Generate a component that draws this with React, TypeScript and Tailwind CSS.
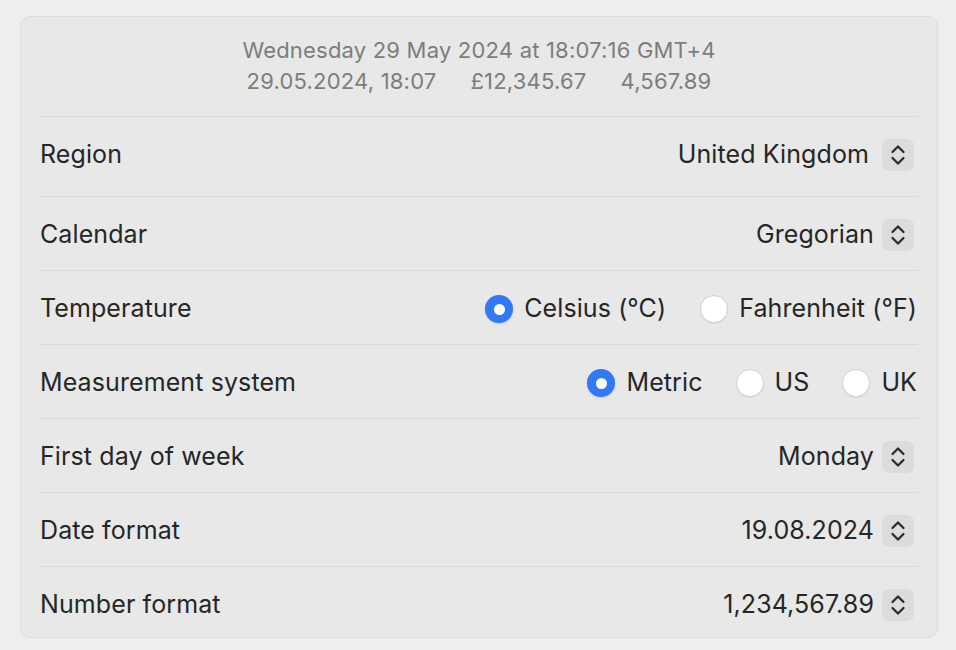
import React from 'react';

const font = { fontFamily: 'Inter, "Noto Sans", sans-serif' };

const Chevrons: React.FC = () => (
  <div className="w-[32px] h-[32px] rounded-[7px] bg-[#dcdcdc] flex items-center justify-center">
    <svg width="16" height="22" viewBox="0 0 16 22" fill="none" stroke="#2a2a2a" strokeWidth="2.2" strokeLinecap="round" strokeLinejoin="round">
      <polyline points="2.5,8 8,2.5 13.5,8" />
      <polyline points="2.5,14 8,19.5 13.5,14" />
    </svg>
  </div>
);

const Radio: React.FC<{ checked?: boolean; label: string }> = ({ checked, label }) => (
  <div className="flex items-center gap-[11px]">
    {checked ? (
      <div className="w-[28px] h-[28px] rounded-full bg-[#3179f5] flex items-center justify-center shadow-[0_1px_2px_rgba(0,0,0,0.15)]">
        <div className="w-[11px] h-[11px] rounded-full bg-white" />
      </div>
    ) : (
      <div className="w-[28px] h-[28px] rounded-full bg-white border border-[#d2d2d2] shadow-[0_1px_1px_rgba(0,0,0,0.06)]" />
    )}
    <span>{label}</span>
  </div>
);

const Select: React.FC<{ value: string; extra?: boolean }> = ({ value, extra }) => (
  <div className={`flex items-center mr-[4px] ${extra ? 'gap-[13px]' : 'gap-[8px]'}`}>
    <span>{value}</span>
    <Chevrons />
  </div>
);

const Row: React.FC<{ label: string; children: React.ReactNode; className?: string }> = ({ label, children, className }) => (
  <div className={`flex items-center justify-between border-t border-[#dadada] ${className ?? 'h-[74px] pt-[3px]'}`}>
    <span>{label}</span>
    {children}
  </div>
);

export default function App() {
  return (
    <div className="w-[956px] h-[650px] bg-[#eeeeee] pt-[16px] pl-[20px] pr-[18px]" style={font}>
      <div className="bg-[#e8e8e8] border border-[#dddddd] rounded-[10px] px-[19px] text-[25px] tracking-[0.1px] text-[#262626]">
        <div className="h-[99px] flex flex-col items-center pt-[18px] text-[22px] tracking-[0.2px] leading-[31px] text-[#7d7d7d]">
          <div>Wednesday 29 May 2024 at 18:07:16 GMT+4</div>
          <div className="flex gap-[34px]">
            <span>29.05.2024, 18:07</span>
            <span>£12,345.67</span>
            <span>4,567.89</span>
          </div>
        </div>
        <Row label="Region" className="h-[80px] pb-[4px]">
          <Select value="United Kingdom" extra />
        </Row>
        <Row label="Calendar">
          <Select value="Gregorian" />
        </Row>
        <Row label="Temperature">
          <div className="flex items-center gap-[34px] mr-[1px]">
            <Radio checked label="Celsius (°C)" />
            <Radio label="Fahrenheit (°F)" />
          </div>
        </Row>
        <Row label="Measurement system">
          <div className="flex items-center gap-[33px] mr-[1px]">
            <Radio checked label="Metric" />
            <Radio label="US" />
            <Radio label="UK" />
          </div>
        </Row>
        <Row label="First day of week">
          <Select value="Monday" />
        </Row>
        <Row label="Date format">
          <Select value="19.08.2024" />
        </Row>
        <Row label="Number format" className="h-[71px] pt-[6px]">
          <Select value="1,234,567.89" />
        </Row>
      </div>
    </div>
  );
}
